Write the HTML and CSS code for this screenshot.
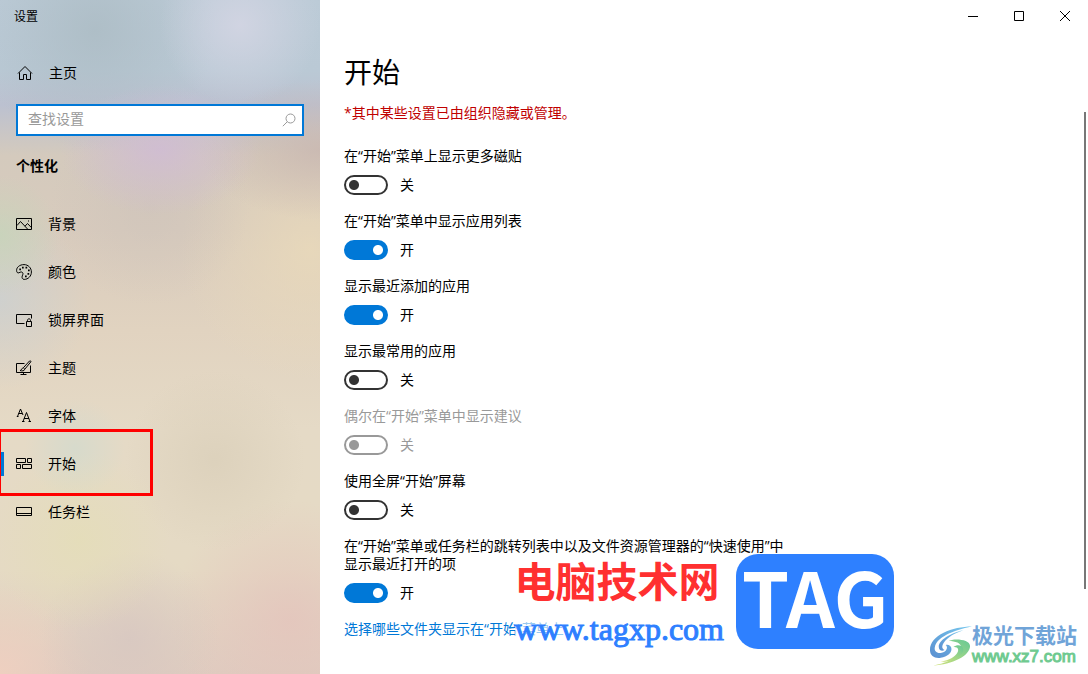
FILE: index.html
```html
<!DOCTYPE html>
<html lang="zh-CN">
<head>
  <meta charset="UTF-8">
  <meta name="viewport" content="width=device-width, initial-scale=1.0">
  <title>设置</title>
  <link rel="stylesheet" href="styles.css">
</head>
<body>
  <div class="window">
    <aside class="sidebar">
      <div class="titlebar">设置</div>
      <a class="home" href="#home">
        <svg class="icon" viewBox="0 0 16 16"><path d="M1 8.5 8 1.5l7 7M2.5 7.5v7h4v-5h3v5h4v-7"/></svg>
        主页
      </a>
      <div class="search">
        <input type="text" id="search" placeholder="查找设置" aria-label="查找设置">
        <svg class="search-icon" viewBox="0 0 14 14"><circle cx="8.5" cy="5.5" r="4.5"/><path d="M5.3 8.7.8 13.2"/></svg>
      </div>
      <h2>个性化</h2>
      <nav>
        <a href="#background">
          <svg class="icon" viewBox="0 0 16 16"><path d="M.5 2.5h15v11H.5zM1 9.5l3.5-4 7.5 8M9 10.200l2.500-2.700 4 4.200"/><path d="M12 5h1"/></svg>
          背景
        </a>
        <a href="#colors">
          <svg class="icon" viewBox="0 0 16 16"><path d="M8 .6C3.500.6.6 3.300.6 6.300c0 2.200 1.100 3 2.300 2.500 1.500-.7 2.600-1.300 3.600-.3 1 1 .2 2.300-.3 3.600-.5 1.700.2 3.300 2 3.300 4 0 7.200-3.300 7.200-7.400S12.200.6 8 .6z"/><path class="dots" d="M3.300 4.500H5v1.700H3.300zM6 2.800h1.700v1.700H6zM9.500 2.800h1.700v1.700H9.500zM12 5.500h1.700v1.700H12zM11.500 9h1.700v1.700h-1.700zM9 11.500h1.700v1.700H9z"/></svg>
          颜色
        </a>
        <a href="#lockscreen">
          <svg class="icon" viewBox="0 0 16 16"><path d="M8.500 11.500h-8v-9h15v4M10.500 9.500h5v5h-5zM11.500 9.500V8.300c0-2 3-2 3 0v1.200"/></svg>
          锁屏界面
        </a>
        <a href="#themes">
          <svg class="icon" viewBox="0 0 16 16"><path d="M8.500 3.500h-8v9h14v-7M7.500 12.500v2M4.500 14.500h6"/><path d="M4 10.500c2 0 1.500-2.500 3.300-2.700L13.500 1c.8-.7 1.800.2 1.200 1L8.800 9.200C8.500 11 6 11.300 4 10.500zM7.300 7.800l1.500 1.400"/></svg>
          主题
        </a>
        <a href="#fonts">
          <svg class="icon" viewBox="0 0 16 16"><path d="M1.500 8.500l3-7.500 2.500 6M2.500 5.500h3.500M7 13.500l3.500-9 3.500 9M8 10.500h5M.8 8.500h1.700M6 13.500h2.500M12.500 13.500h2.500"/></svg>
          字体
        </a>
        <a class="active" href="#start" aria-current="page">
          <svg class="icon" viewBox="0 0 16 16"><path d="M.5 2.500h9v4h-9zM11.500 2.500h4v4h-4zM.5 8.500h4v4h-4zM6.500 8.500h9v4h-9z"/></svg>
          开始
        </a>
        <a href="#taskbar">
          <svg class="icon" viewBox="0 0 16 16"><path d="M.5 3.500h15v8H.5zM.5 9.500h15"/></svg>
          任务栏
        </a>
      </nav>
    </aside>

    <main class="content">
      <div class="controls">
        <button type="button" aria-label="最小化"><svg viewBox="0 0 10 10"><path d="M0 5.500h10"/></svg></button>
        <button type="button" aria-label="最大化"><svg viewBox="0 0 10 10"><path d="M.5.5h9v9h-9z"/></svg></button>
        <button type="button" aria-label="关闭"><svg viewBox="0 0 10 10"><path d="M0 0l10 10M10 0 0 10"/></svg></button>
      </div>

      <div class="page">
        <h1>开始</h1>
        <p class="notice">*其中某些设置已由组织隐藏或管理。</p>

        <div class="setting">
          <label for="tiles">在“开始”菜单上显示更多磁贴</label>
          <div class="switch"><input type="checkbox" role="switch" id="tiles"><span class="state"></span></div>
        </div>
        <div class="setting">
          <label for="applist">在“开始”菜单中显示应用列表</label>
          <div class="switch"><input type="checkbox" role="switch" id="applist" checked><span class="state"></span></div>
        </div>
        <div class="setting">
          <label for="recent">显示最近添加的应用</label>
          <div class="switch"><input type="checkbox" role="switch" id="recent" checked><span class="state"></span></div>
        </div>
        <div class="setting">
          <label for="mostused">显示最常用的应用</label>
          <div class="switch"><input type="checkbox" role="switch" id="mostused"><span class="state"></span></div>
        </div>
        <div class="setting disabled">
          <label for="suggest">偶尔在“开始”菜单中显示建议</label>
          <div class="switch"><input type="checkbox" role="switch" id="suggest" disabled><span class="state"></span></div>
        </div>
        <div class="setting">
          <label for="fullscreen">使用全屏“开始”屏幕</label>
          <div class="switch"><input type="checkbox" role="switch" id="fullscreen"><span class="state"></span></div>
        </div>
        <div class="setting">
          <label for="jumplist">在“开始”菜单或任务栏的跳转列表中以及文件资源管理器的“快速使用”中显示最近打开的项</label>
          <div class="switch"><input type="checkbox" role="switch" id="jumplist" checked><span class="state"></span></div>
        </div>
        <a class="link" href="#folders">选择哪些文件夹显示在“开始”菜单上</a>
      </div>

      <div class="scrollbar"></div>

      <div class="tag-mark">
        <div class="tag-text">
          <span class="tag-name">电脑技术网</span>
          <span class="tag-url">www.tagxp.com</span>
        </div>
        <div class="tag-logo">TAG</div>
      </div>

      <div class="xz-mark">
        <svg class="xz-logo" viewBox="0 0 44 42">
          <defs>
            <linearGradient id="blue" x1="0" y1="1" x2="1" y2="0"><stop offset="0" stop-color="#5a8fd0"/><stop offset="1" stop-color="#77c8ee"/></linearGradient>
            <linearGradient id="green" x1="0" y1="1" x2="1" y2="0"><stop offset="0" stop-color="#d3e27a"/><stop offset="1" stop-color="#65c895"/></linearGradient>
          </defs>
          <path fill="url(#blue)" d="M44 1C24 1 1 10 1 25c0 6 5 9 11 8 7-1 11-5 11-9 0-3-3-5-6-4 3 2 1 7-4 8-5 1-8-2-7-6C8 12 24 5 44 1z"/>
          <path fill="url(#blue)" d="M35 5C22 8 10 15 10 22c0 3 3 5 6 3-3-1-3-4-1-7 4-6 11-10 20-13z"/>
          <path fill="url(#green)" d="M20 16c5-3 22-2 22 5 0 10-18 19-38 20 16-3 29-9 29-18 0-5-6-7-13-7z"/>
          <path fill="url(#green)" d="M25 22c9-1 6 12-13 15 12 1 24-6 23-13-1-4-6-5-10-2z"/>
        </svg>
        <div class="xz-text">
          <span class="xz-name">极光下载站</span>
          <span class="xz-url">www.xz7.com</span>
        </div>
      </div>
    </main>
  </div>
</body>
</html>
```
FILE: styles.css
```css
*, *::before, *::after { margin: 0; padding: 0; box-sizing: border-box; }
body { font-family: "Open Sans", "Noto Sans CJK SC", sans-serif; font-size: 14px; line-height: 18px; color: #000; background: #fff; }
a { color: inherit; text-decoration: none; }
svg { fill: none; stroke: currentColor; stroke-width: 1; flex: none; }
.window { display: flex; min-height: 100vh; }

/* sidebar */
.sidebar {
  flex: 0 0 320px;
  overflow: hidden;
  background:
    radial-gradient(circle at 75px 448px, rgba(205, 218, 208, .6), rgba(205, 218, 208, 0) 50px),
    radial-gradient(circle at 80px 540px, rgba(228, 222, 182, .7), rgba(228, 222, 182, 0) 90px),
    radial-gradient(ellipse 100px 65px at 160px 150px, rgba(208, 187, 214, .8), rgba(208, 187, 214, 0)),
    radial-gradient(circle at 0 235px, rgba(198, 213, 186, .8), rgba(198, 213, 186, 0) 60px),
    radial-gradient(circle at 0 300px, rgba(200, 208, 212, .7), rgba(200, 208, 212, 0) 90px),
    radial-gradient(circle at 240px 25px, rgba(211, 213, 227, .9), rgba(211, 213, 227, 0) 80px),
    radial-gradient(circle at 95px 30px, rgba(171, 187, 195, .8), rgba(171, 187, 195, 0) 120px),
    radial-gradient(ellipse 120px 70px at 320px 150px, rgba(200, 182, 176, .8), rgba(200, 182, 176, 0)),
    radial-gradient(circle at 150px 205px, rgba(203, 193, 186, .5), rgba(203, 193, 186, 0) 100px),
    radial-gradient(circle at 310px 250px, rgba(234, 218, 186, .8), rgba(234, 218, 186, 0) 130px),
    radial-gradient(circle at 215px 460px, rgba(215, 204, 182, .6), rgba(215, 204, 182, 0) 90px),
    radial-gradient(circle at 130px 640px, rgba(215, 199, 193, .8), rgba(215, 199, 193, 0) 90px),
    radial-gradient(circle at 0 674px, rgba(240, 208, 192, .9), rgba(240, 208, 192, 0) 90px),
    radial-gradient(circle at 290px 620px, rgba(228, 196, 188, .8), rgba(228, 196, 188, 0) 120px),
    linear-gradient(#bccbd7 0, #bac9d5 70px, #bcc1d0 105px, #d4cabd 155px, #d8cbbd 230px, #e1d3c0 330px, #e5dac6 430px, #e5dac4 570px, #dfccc0 674px);
}
.titlebar { height: 32px; padding: 0 14px; font-size: 12px; line-height: 34px; }
.home { display: flex; align-items: center; gap: 16px; height: 48px; margin-top: 17px; padding: 0 17px; }
.icon { width: 16px; height: 16px; }
.dots { fill: currentColor; stroke: none; }
.search { position: relative; margin: 7px 16px 0; }
.search input { display: block; width: 100%; height: 32px; padding: 0 32px 4px 10px; border: 2px solid #0078d7; border-radius: 0; outline: none; background: #fff; font: inherit; }
.search input::placeholder { color: #999; opacity: 1; }
.search-icon { position: absolute; right: 8px; top: 9px; width: 14px; height: 14px; color: #999; }
.sidebar h2 { margin: 21px 16px 25px; font-size: 14px; line-height: 18px; font-weight: 700; }
nav a { position: relative; display: flex; align-items: center; gap: 16px; height: 48px; padding: 0 16px; }
nav .active::before { content: ""; position: absolute; left: 0; top: 12px; width: 4px; height: 24px; background: #0078d7; }
nav .active::after { content: ""; position: absolute; left: -2px; top: -11px; width: 155px; height: 67px; border: 3px solid #f00; }

/* content */
.content { position: relative; flex: 1; min-width: 0; }
.controls { display: flex; justify-content: flex-end; height: 32px; }
.controls button { display: flex; align-items: center; justify-content: center; width: 46px; border: 0; background: none; }
.controls svg { width: 10px; height: 10px; }
.page { max-width: 490px; padding: 20px 24px; }
h1 { font-size: 28px; line-height: 40px; font-weight: 400; }
.notice { margin: 12px 0 25px; color: #c00000; }
.setting { margin-bottom: 17px; }
.setting label { display: block; }
.switch { display: flex; align-items: center; gap: 12px; height: 20px; margin-top: 10px; }
.switch input { appearance: none; width: 44px; height: 20px; border: 2px solid #333; border-radius: 10px; background: radial-gradient(circle at 8px 8px, #333 4.5px, transparent 5.5px); }
.switch input:checked { border-color: #0078d7; background: radial-gradient(circle at 32px 8px, #fff 4.5px, #0078d7 5.5px); }
.state::before { content: "关"; }
input:checked + .state::before { content: "开"; }
.disabled { color: #999; }
.switch input:disabled { border-color: #999; background: radial-gradient(circle at 8px 8px, #999 4.5px, transparent 5.5px); }
.link { color: #0078d7; }
.scrollbar { position: absolute; right: 2px; top: 112px; width: 2px; height: 477px; background: #777; }

/* watermarks */
.tag-mark { position: absolute; right: 194px; bottom: 20px; display: flex; gap: 12px; }
.tag-text { display: flex; flex-direction: column; }
.tag-name { color: #ff3030; font-family: "Noto Sans CJK SC", sans-serif; font-size: 41px; line-height: 50px; font-weight: 700; }
.tag-url { color: #2e7fff; background: rgba(255, 255, 255, .6); font-family: "Liberation Serif", serif; font-size: 32px; line-height: 50px; -webkit-text-stroke: 1px #2e7fff; }
.tag-logo { width: 158px; height: 95px; border-radius: 22px; background: #2e80ff; color: #fff; font-family: "Noto Sans CJK SC", sans-serif; font-size: 76px; line-height: 82px; font-weight: 700; text-align: center; }
.xz-mark { position: absolute; right: 11px; bottom: 5px; display: flex; align-items: center; }
.xz-logo { width: 43px; height: 42px; stroke: none; }
.xz-text { display: flex; flex-direction: column; }
.xz-name { color: #70a4d8; font-family: "Noto Sans CJK SC", sans-serif; font-size: 21px; line-height: 22px; font-weight: 700; }
.xz-url { color: #6fca90; font-family: "Liberation Sans", sans-serif; font-size: 17px; line-height: 24px; -webkit-text-stroke: 1px #6fca90; }
```
